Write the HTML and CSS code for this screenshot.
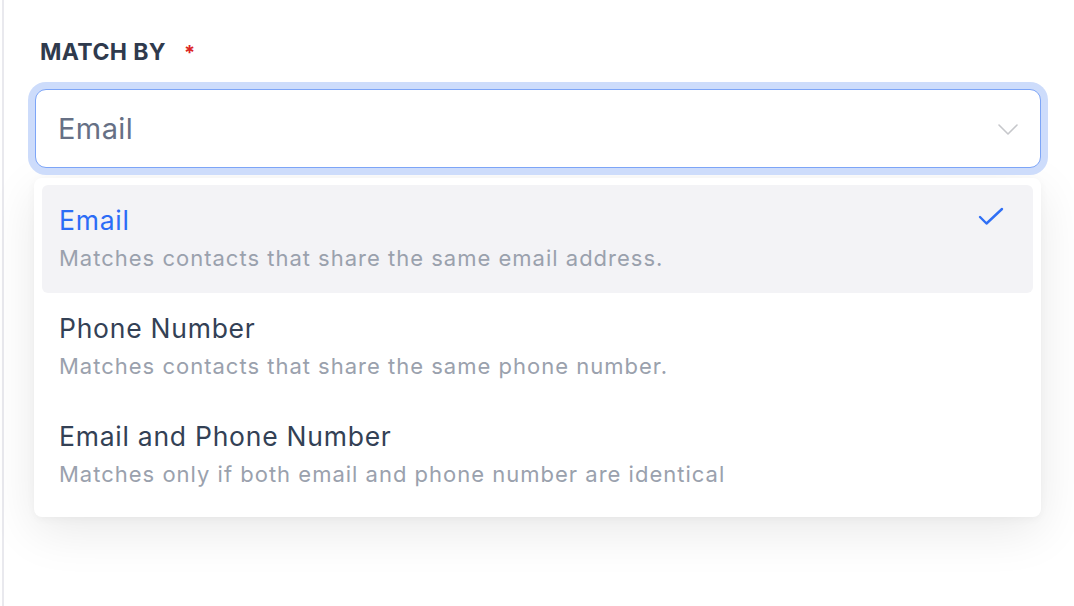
FILE: index.html
```html
<!DOCTYPE html>
<html>
<head>
<meta charset="utf-8">
<link rel="stylesheet" href="styles.css">
</head>
<body>
<div class="panel">
  <div class="field">
    <div class="label">MATCH BY <span class="req">*</span></div>
    <div class="select">
      <span class="value">Email</span>
      <svg class="chev" width="20" height="11" viewBox="0 0 20 11"><path d="M1 1 L10 10 L19 1" fill="none" stroke="#c6c7cb" stroke-width="1.6" stroke-linecap="round" stroke-linejoin="round"/></svg>
    </div>
    <div class="menu">
      <div class="opt active">
        <div class="texts">
          <div class="title">Email</div>
          <div class="desc">Matches contacts that share the same email address.</div>
        </div>
        <svg class="check" width="26" height="19" viewBox="0 0 26 19"><path d="M2 10 L8.5 16.5 L24 2" fill="none" stroke="#2f6ff5" stroke-width="2.4" stroke-linecap="round" stroke-linejoin="round"/></svg>
      </div>
      <div class="opt">
        <div class="texts">
          <div class="title">Phone Number</div>
          <div class="desc">Matches contacts that share the same phone number.</div>
        </div>
      </div>
      <div class="opt">
        <div class="texts">
          <div class="title">Email and Phone Number</div>
          <div class="desc">Matches only if both email and phone number are identical</div>
        </div>
      </div>
    </div>
  </div>
</div>
</body>
</html>
```
FILE: styles.css
```css
html, body {
  margin: 0;
  padding: 0;
  background: #ffffff;
}
body {
  font-family: Inter, "Noto Sans", sans-serif;
  width: 1074px;
  height: 606px;
  overflow: hidden;
}
.panel {
  margin-left: 2px;
  border-left: 2px solid #e9e9ee;
  height: 606px;
  box-sizing: border-box;
  padding: 38px 0 0 30px;
}
.field {
  width: 1007px;
}
.label {
  font-size: 23px;
  font-weight: 700;
  color: #2f3a4d;
  line-height: 28px;
  letter-spacing: 0.4px;
  padding-left: 6px;
}
.req {
  color: #dc2626;
  margin-left: 12px;
  font-size: 20px;
}
.select {
  margin-top: 22px;
  margin-left: 1px;
  height: 79px;
  box-sizing: border-box;
  border: 1.5px solid #7da5f7;
  border-radius: 11px;
  box-shadow: 0 0 0 7px #cddcfb;
  display: flex;
  align-items: center;
  justify-content: space-between;
  padding: 0 22px 0 22px;
  background: #fff;
  position: relative;
  z-index: 2;
}
.value {
  font-size: 29px;
  letter-spacing: 0.4px;
  color: #667085;
}
.chev {
  margin-top: 2px;
}
.menu {
  margin-top: 10px;
  background: #fff;
  border-radius: 8px;
  padding: 7px 8px 8px 8px;
  box-shadow: 0 14px 50px rgba(0, 0, 0, 0.09), 0 2px 8px rgba(0, 0, 0, 0.04);
  position: relative;
  z-index: 1;
}
.opt {
  height: 108px;
  box-sizing: border-box;
  padding: 17px 29px 0 17px;
  border-radius: 6px;
  display: flex;
  justify-content: space-between;
  align-items: flex-start;
}
.opt.active {
  background: #f3f3f6;
}
.title {
  font-size: 26.5px;
  line-height: 36px;
  letter-spacing: 0.75px;
  color: #334155;
}
.active .title {
  color: #2b6cf6;
}
.desc {
  margin-top: 4px;
  font-size: 22px;
  line-height: 32px;
  letter-spacing: 1px;
  color: #9aa1ad;
}
.check {
  margin-top: 5px;
}
```
